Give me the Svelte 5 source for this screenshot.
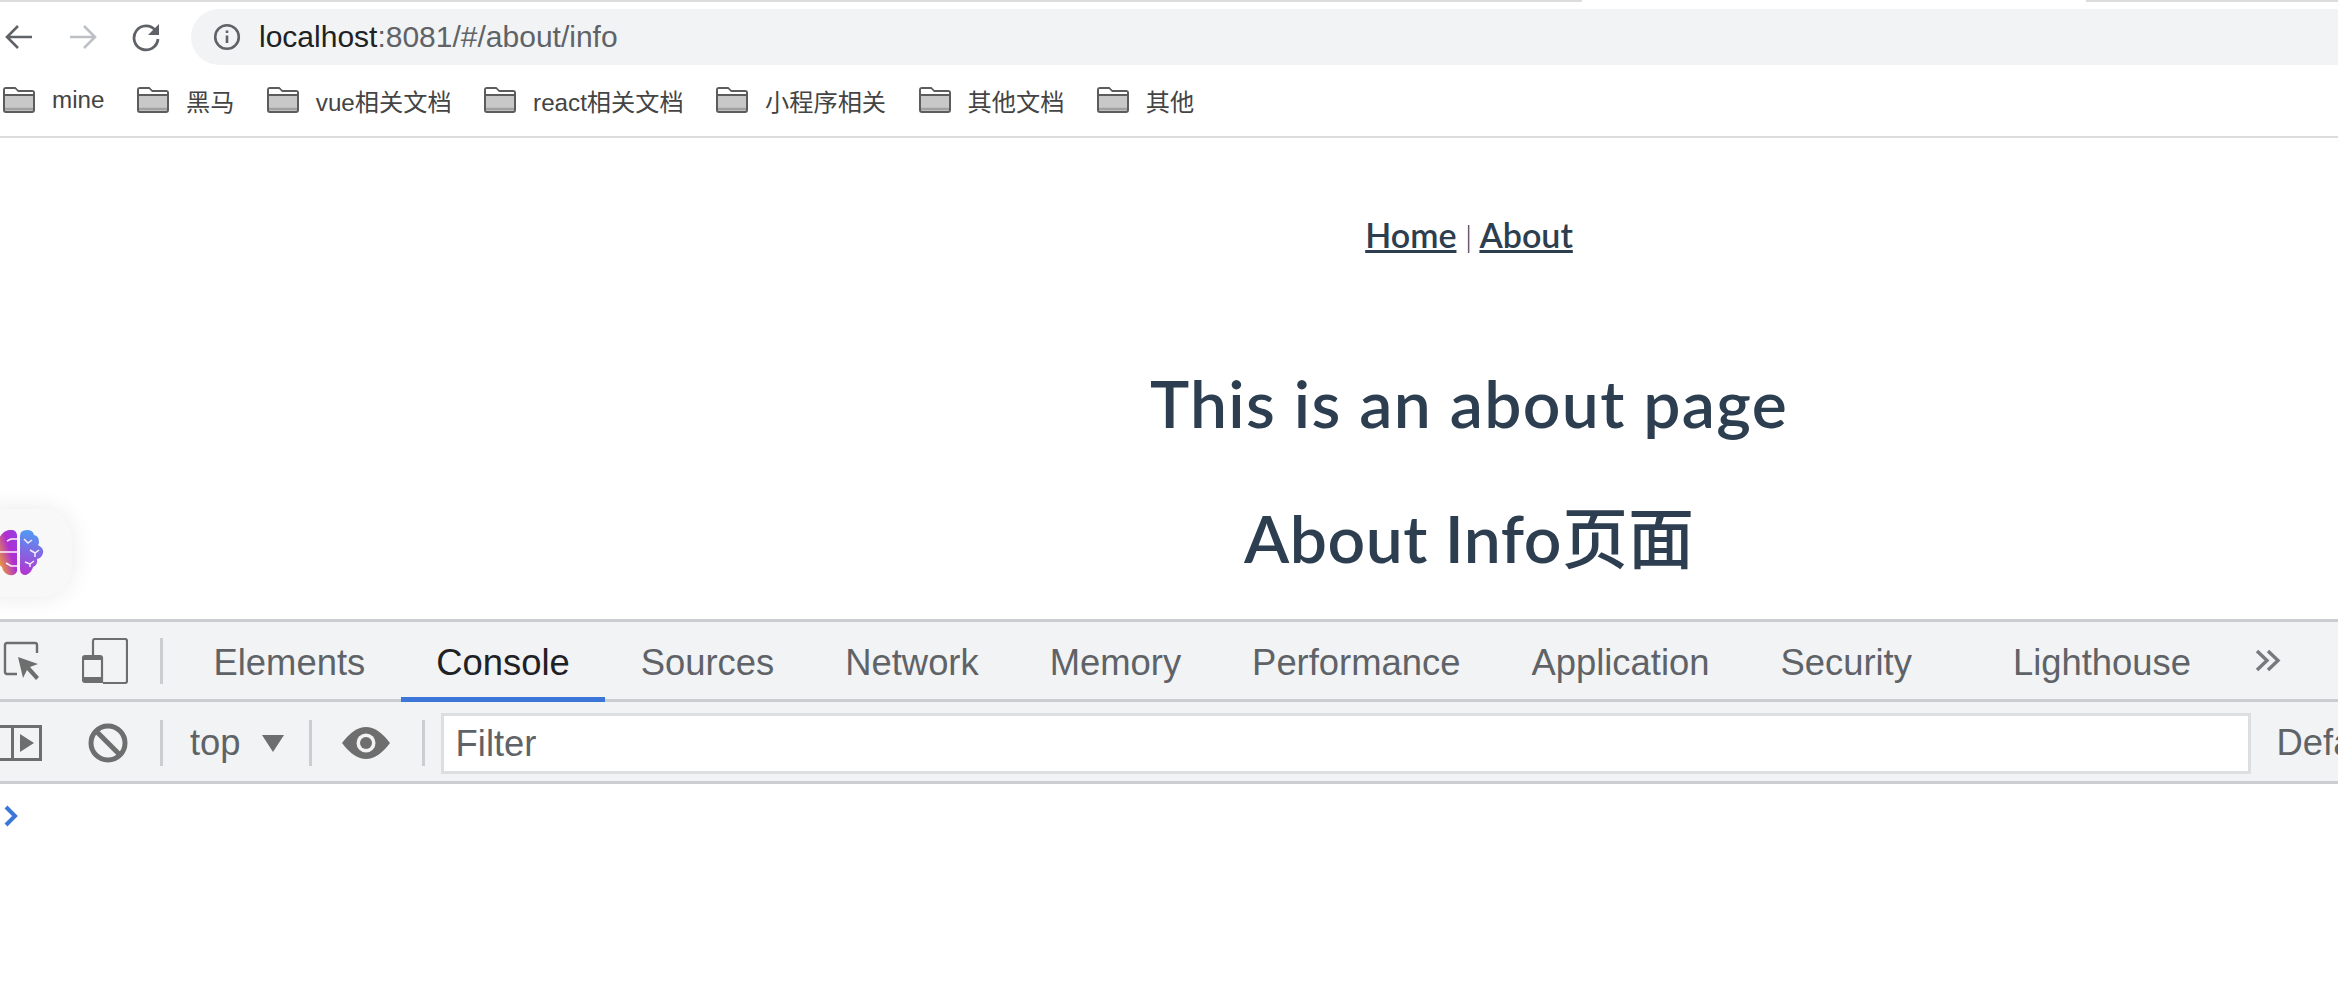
<script>
	const bookmarks = ['mine', '黑马', 'vue相关文档', 'react相关文档', '小程序相关', '其他文档', '其他'];
	const tabs = ['Elements', 'Console', 'Sources', 'Network', 'Memory', 'Performance', 'Application', 'Security', 'Lighthouse'];
</script>

<div class="window">
	<div class="top-line"><span class="line-a"></span><span class="line-b"></span></div>

	<header class="toolbar">
		<svg class="nav-icon" viewBox="0 0 30 30" width="30" height="30" aria-label="Back">
			<path d="M28 15H3M14 4 3 15l11 11" fill="none" stroke="#5f6368" stroke-width="2.6" />
		</svg>
		<svg class="nav-icon forward" viewBox="0 0 30 30" width="30" height="30" aria-label="Forward">
			<path d="M2 15h25M16 4l11 11-11 11" fill="none" stroke="#bdc0c4" stroke-width="2.6" />
		</svg>
		<svg class="nav-icon reload" viewBox="0 0 30 30" width="30" height="30" aria-label="Reload">
			<path d="M24.5 8.5A12 12 0 1 0 27 17" fill="none" stroke="#5f6368" stroke-width="2.8" />
			<path d="M28 2v11H17z" fill="#5f6368" />
		</svg>
		<div class="omnibox">
			<svg viewBox="0 0 28 28" width="28" height="28" aria-label="Site info">
				<circle cx="14" cy="14" r="11.8" fill="none" stroke="#5f6368" stroke-width="2.6" />
				<path d="M14 12.5v7.5M14 7.5v2.6" stroke="#5f6368" stroke-width="2.6" />
			</svg>
			<span class="url"><b>localhost</b>:8081/#/about/info</span>
		</div>
	</header>

	<nav class="bookmarks">
		{#each bookmarks as name}
			<div class="bookmark">
				<svg viewBox="0 0 32 26" width="32" height="26">
					<path d="M1 3q0-2 2-2h9l3 3h14q2 0 2 2v17q0 2-2 2H3q-2 0-2-2z" fill="#c8c8c8" stroke="#5c5c5c" stroke-width="2" />
					<path d="M2 2h10l3 3h15v2H2z" fill="#fff" />
					<path d="M2 8h28" stroke="#5c5c5c" stroke-width="2" />
					<path d="M2 22h28" stroke="#a0a0a0" stroke-width="2.4" />
				</svg>
				<span>{name}</span>
			</div>
		{/each}
	</nav>

	<main class="page">
		<div class="links"><a href="#/">Home</a> <i>|</i> <a href="#/about">About</a></div>
		<h1>This is an about page</h1>
		<h1 class="second">About Info<span>页面</span></h1>

		<div class="brain-widget">
			<svg viewBox="0 0 46 46" width="46" height="46">
				<defs>
					<linearGradient id="left-half" x1="0.1" y1="0.9" x2="1" y2="0.2">
						<stop offset="0" stop-color="#f0a030" />
						<stop offset="0.6" stop-color="#b02fd0" />
						<stop offset="1" stop-color="#9a3be0" />
					</linearGradient>
					<linearGradient id="right-half" x1="0.5" y1="0" x2="0.4" y2="1">
						<stop offset="0" stop-color="#4f9cf5" />
						<stop offset="1" stop-color="#b335d0" />
					</linearGradient>
				</defs>
				<path d="M10 0q7-1 8 5v36q-1 5-8 4-6-2-7-8-5-3-3-10V8q4-7 10-8z" fill="url(#left-half)" />
				<path d="M21 6q0-6 7-6 6 0 7 5 5 1 5 7 0 2-1 3 6 3 5 8t-6 6q1 6-4 8-1 5-7 8-6 0-6-6z" fill="url(#right-half)" />
				<path d="M18 9h-6l-4 2M0 22h18M18 36h-6l-5-3" fill="none" stroke="#fbf3fb" stroke-width="1.5" />
				<path d="M25 9l4 4 4-3M29 13v0M31 20l5 3 4-3M36 23v4M26 32l5 2 4-3M31 34v3" fill="none" stroke="#f5ecfb" stroke-width="1.5" />
			</svg>
		</div>
	</main>

	<section class="devtools">
		<div class="tabbar">
			<svg class="inspect" viewBox="0 0 42 42" width="42" height="42" aria-label="Inspect">
				<path d="M14 34H4q-2 0-2-2V5q0-2 2-2h28q2 0 2 2v8" fill="none" stroke="#6e6e6e" stroke-width="2.4" />
				<path d="M15 17l20 7-8 3 9 10-3 3-9-10-4 8z" fill="#6e6e6e" />
			</svg>
			<svg class="device" viewBox="0 0 46 46" width="46" height="46" aria-label="Device">
				<path d="M11 17V3q0-2 2-2h30q2 0 2 2v40q0 2-2 2H21" fill="none" stroke="#6e6e6e" stroke-width="2.2" />
				<path d="M3 18h15q2 0 2 2v24H3q-2 0-2-2V20q0-2 2-2z" fill="none" stroke="#6e6e6e" stroke-width="2.2" />
				<path d="M2 39h17v5H2z" fill="#6e6e6e" />
				<path d="M2 18h17v4H2z" fill="#6e6e6e" />
			</svg>
			<span class="divider"></span>
			<div class="tabs">
				{#each tabs as tab}
					<div class="tab" class:active={tab === 'Console'} class:lighthouse={tab === 'Lighthouse'}>{tab}</div>
				{/each}
				<svg class="more" viewBox="0 0 26 23" width="26" height="23" aria-label="More tabs">
					<path d="M2 2l10 9.5L2 21M13 2l10 9.5L13 21" fill="none" stroke="#77797c" stroke-width="3.4" />
				</svg>
			</div>
		</div>

		<div class="consolebar">
			<svg class="sidebar" viewBox="0 0 42 36" width="42" height="36" aria-label="Sidebar">
				<path d="M-2 1.5h42.5v33H-2M12.5 1.5v33" fill="none" stroke="#6e6e6e" stroke-width="3" />
				<path d="M20 9l14 9-14 9z" fill="#6e6e6e" />
			</svg>
			<svg class="clear" viewBox="0 0 40 40" width="40" height="40" aria-label="Clear">
				<circle cx="20" cy="20" r="17" fill="none" stroke="#6e6e6e" stroke-width="5" />
				<path d="M8 8l24 24" stroke="#6e6e6e" stroke-width="5" />
			</svg>
			<span class="divider"></span>
			<span class="context">top</span>
			<span class="caret"></span>
			<span class="divider"></span>
			<svg class="eye" viewBox="0 0 48 32" width="48" height="32" aria-label="Live expressions">
				<path d="M0 16Q12 0 24 0t24 16Q36 32 24 32T0 16z" fill="#6e6e6e" />
				<circle cx="24" cy="16" r="9.5" fill="#f1f3f4" />
				<circle cx="24" cy="16" r="6" fill="#6e6e6e" />
			</svg>
			<span class="divider"></span>
			<div class="filter">Filter</div>
			<span class="levels">Default levels</span>
		</div>

		<svg class="prompt" viewBox="0 0 15 22" width="15" height="22" aria-label="Prompt">
			<path d="M2 2l9 9-9 9" fill="none" stroke="#3b76d8" stroke-width="4" />
		</svg>
	</section>
</div>

<style>
	:global(body) {
		margin: 0;
		background: #fff;
		overflow: hidden;
		font-family: 'Liberation Sans', 'Noto Sans CJK SC', sans-serif;
	}

	svg {
		flex: none;
	}

	.window {
		width: 2338px;
		height: 994px;
		overflow: hidden;
		display: flex;
		flex-direction: column;
	}

	.top-line {
		height: 2px;
		display: flex;
		justify-content: space-between;
	}

	.line-a,
	.line-b {
		background: #dcdcdc;
	}

	.line-a {
		width: 1582px;
	}

	.line-b {
		width: 252px;
	}

	.toolbar {
		height: 74px;
		display: flex;
		align-items: center;
		box-sizing: border-box;
		padding: 0 0 4px 4px;
	}

	.forward {
		margin-left: 34px;
	}

	.reload {
		margin-left: 33px;
	}

	.omnibox {
		margin-left: 30px;
		flex: 1;
		height: 56px;
		background: #f1f3f4;
		border-radius: 28px 0 0 28px;
		display: flex;
		align-items: center;
		padding-left: 22px;
		gap: 18px;
	}

	.url {
		font-size: 30px;
		color: #5f6368;
	}

	.url b {
		font-weight: 400;
		color: #202124;
	}

	.bookmarks {
		height: 62px;
		box-sizing: border-box;
		display: flex;
		align-items: center;
		gap: 32.5px;
		padding: 0 0 12px 3px;
		border-bottom: 2px solid #dcdcdc;
	}

	.bookmark {
		display: flex;
		align-items: center;
		gap: 17px;
		font-size: 24.2px;
		color: #444;
	}

	.page {
		position: relative;
		height: 481px;
		box-sizing: border-box;
		padding: 78px 0 0 600px;
		text-align: center;
		color: #2c3e50;
		font-family: Lato, 'Noto Sans CJK SC', sans-serif;
	}

	.links {
		font-size: 34px;
		line-height: 38px;
		font-weight: 600;
	}

	.links a {
		color: #2c3e50;
		text-decoration-thickness: 3px;
	}

	.links i {
		font-style: normal;
		font-weight: 300;
		font-size: 30px;
	}

	h1 {
		margin: 0;
		font-size: 66px;
		font-weight: 600;
		line-height: 80px;
		letter-spacing: 1.3px;
	}

	h1:not(.second) {
		margin-top: 108px;
	}

	.second {
		margin-top: 55px;
		letter-spacing: 0.5px;
	}

	.second span {
		font-weight: 500;
		letter-spacing: 0;
	}

	.brain-widget {
		position: absolute;
		left: -30px;
		top: 371px;
		width: 102px;
		height: 88px;
		border-radius: 30px;
		background: #f8f8f9;
		box-shadow: 0 0 24px rgba(0, 0, 0, 0.09);
	}

	.brain-widget svg {
		position: absolute;
		left: 29px;
		top: 21px;
	}

	.devtools {
		flex: 1;
		color: #5f6368;
	}

	.tabbar {
		height: 83px;
		box-sizing: border-box;
		background: #f1f3f4;
		border-top: 3px solid #cbcdd1;
		border-bottom: 3px solid #cbcdd1;
		display: flex;
		align-items: center;
		padding-left: 3px;
	}

	.device {
		margin-left: 37px;
	}

	.divider {
		width: 3px;
		height: 46px;
		background: #cbcdd1;
		flex: none;
	}

	.tabbar .divider {
		margin-left: 32px;
	}

	.tabs {
		display: flex;
		align-items: center;
		height: 100%;
		margin-left: 15px;
	}

	.tab {
		height: 80px;
		margin-bottom: -3px;
		box-sizing: border-box;
		padding: 3px 35.5px 0;
		font-size: 36.4px;
		line-height: 75px;
		border-bottom: 5px solid transparent;
	}

	.tab.active {
		color: #202124;
		border-bottom-color: #3b76d8;
	}

	.tab.lighthouse {
		margin-left: 30px;
	}

	.more {
		margin-left: 28px;
	}

	.consolebar {
		height: 82px;
		box-sizing: border-box;
		background: #f1f3f4;
		border-bottom: 3px solid #cbcdd1;
		display: flex;
		align-items: center;
		padding-top: 3px;
	}

	.clear {
		margin-left: 46px;
	}

	.consolebar .divider:nth-of-type(1) {
		margin-left: 32px;
	}

	.context {
		margin-left: 27px;
		font-size: 36.4px;
	}

	.caret {
		margin: 0 25px 0 21px;
		border-left: 11px solid transparent;
		border-right: 11px solid transparent;
		border-top: 17px solid #6e6e6e;
	}

	.eye {
		margin: 0 32px 0 30px;
	}

	.filter {
		margin-left: 16px;
		width: 1810px;
		height: 61px;
		flex: none;
		box-sizing: border-box;
		background: #fff;
		border: 3px solid #dcdee0;
		padding-left: 12px;
		font-size: 36.4px;
		line-height: 55px;
	}

	.levels {
		margin-left: 26px;
		font-size: 36.4px;
		white-space: nowrap;
	}

	.prompt {
		display: block;
		margin: 21px 0 0 4px;
	}
</style>
